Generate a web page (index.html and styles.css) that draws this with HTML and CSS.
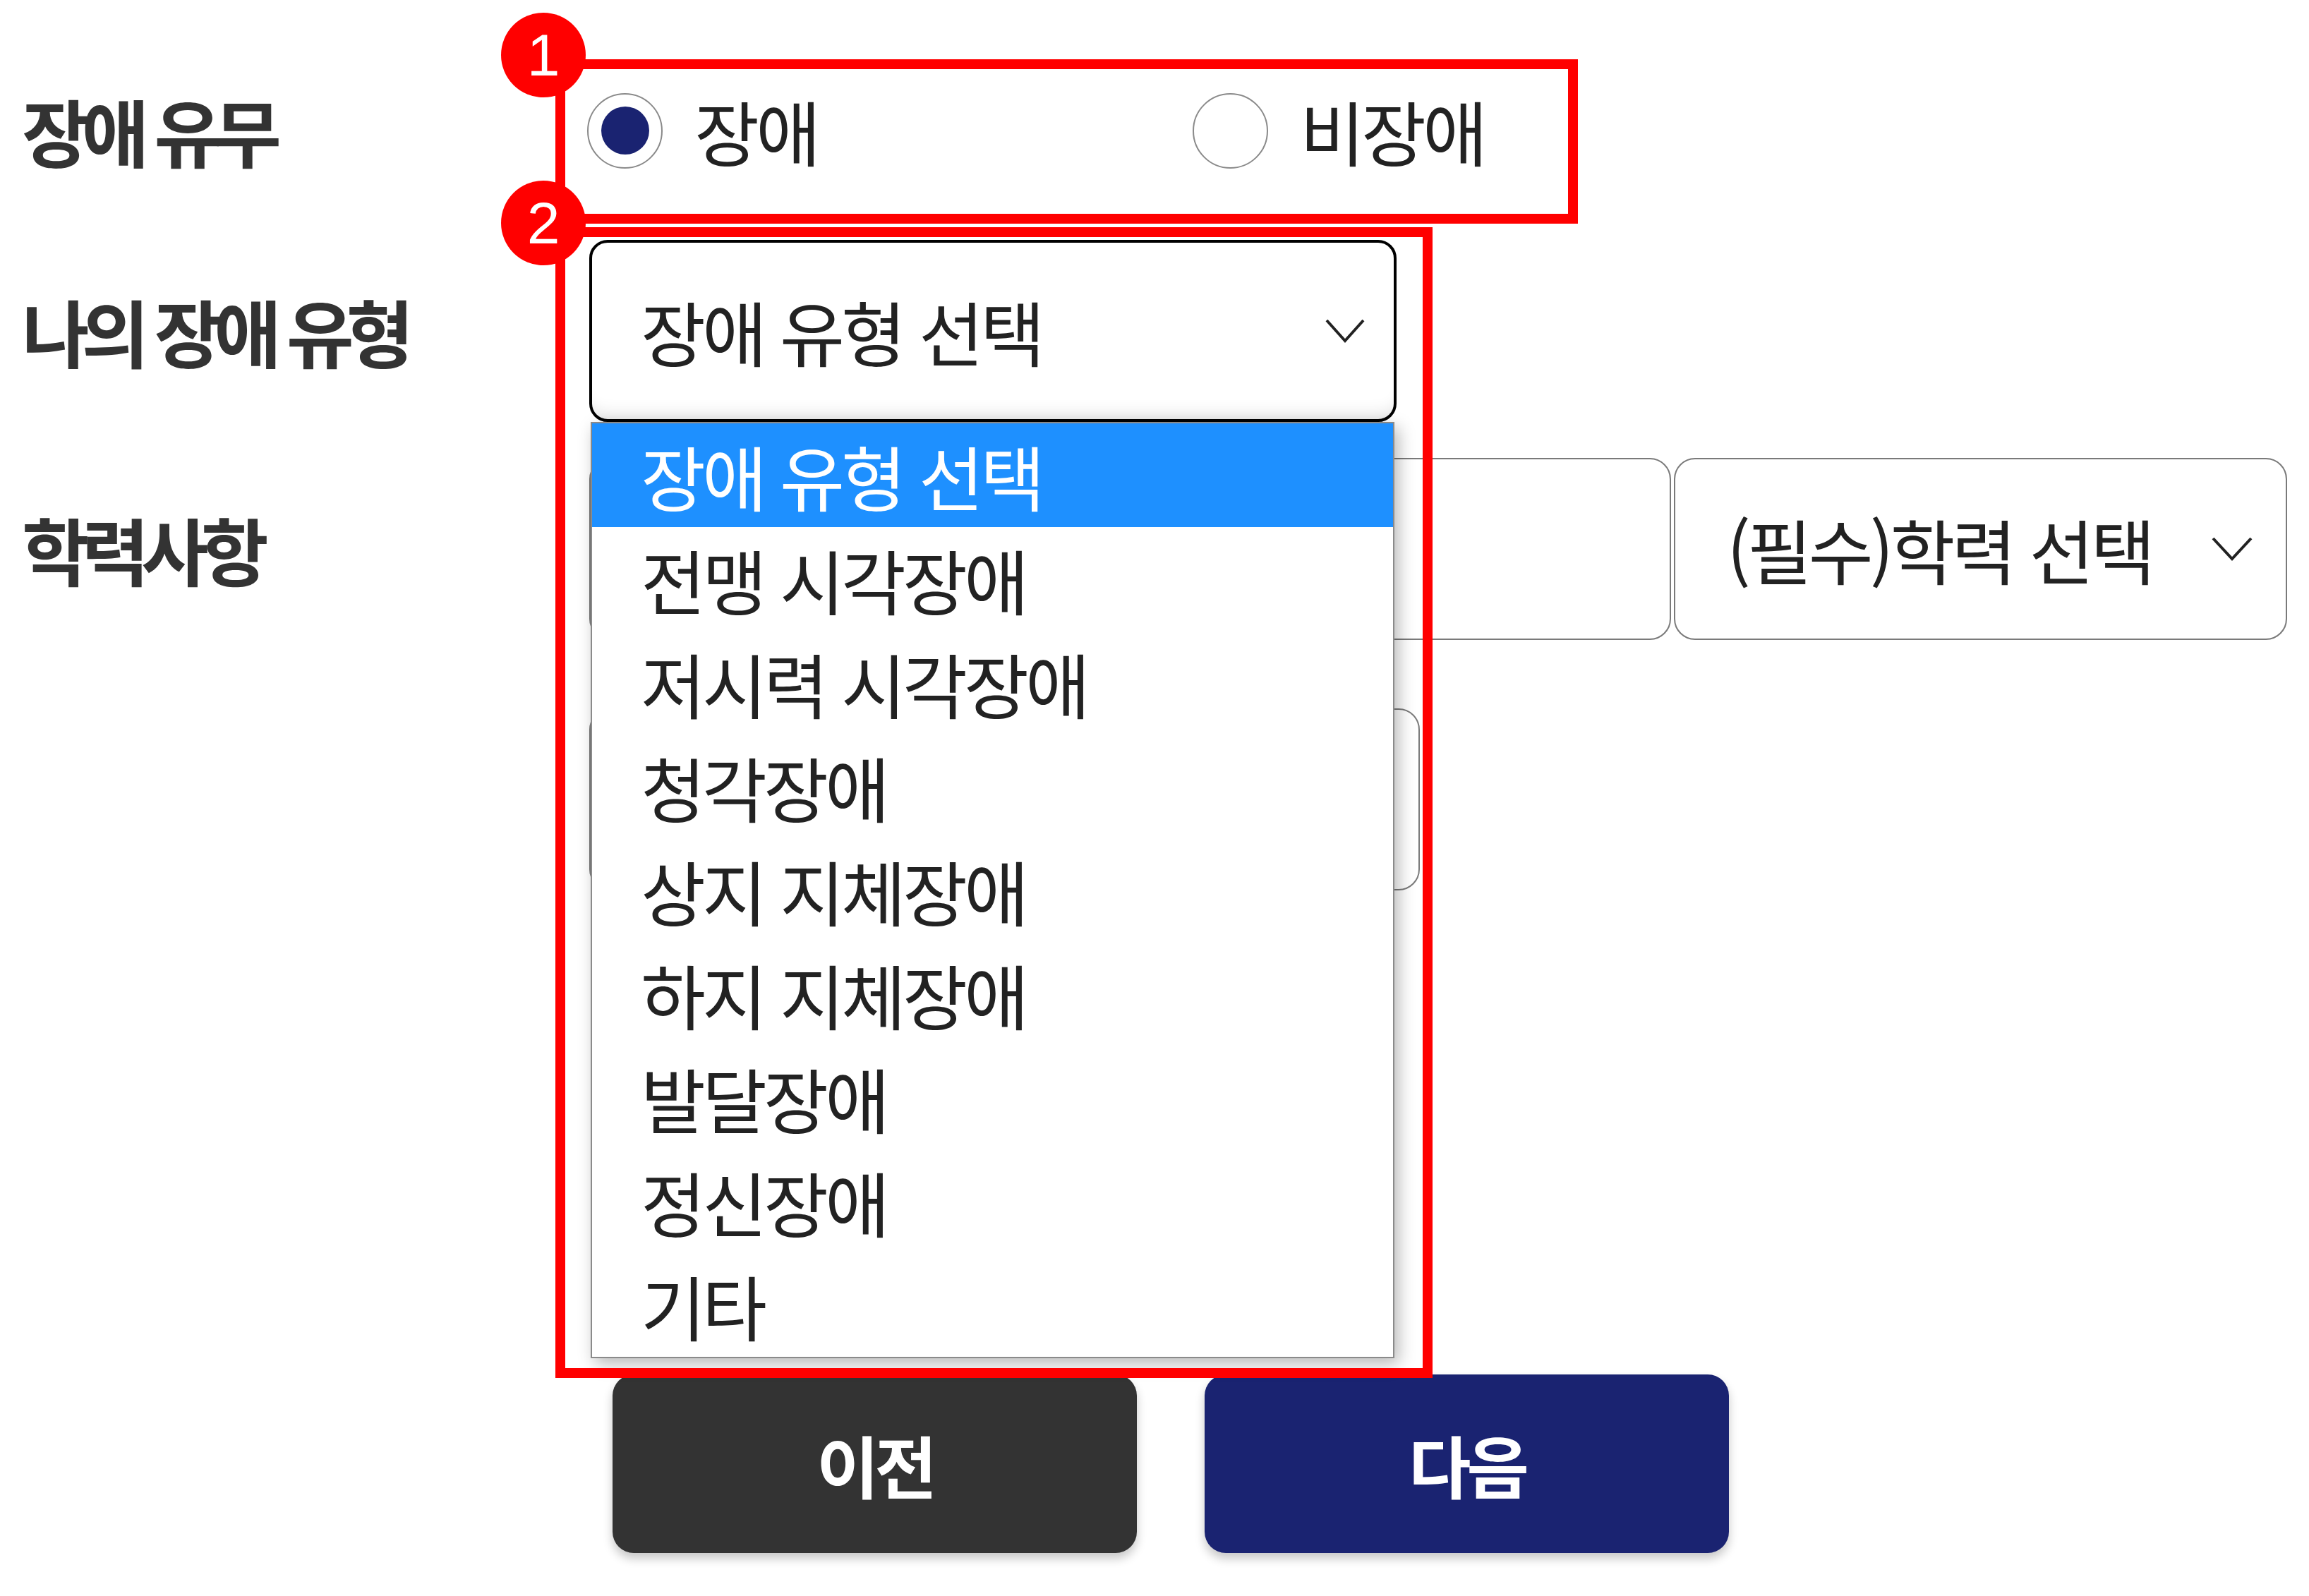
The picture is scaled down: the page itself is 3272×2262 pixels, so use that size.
FILE: index.html
```html
<!DOCTYPE html>
<html lang="ko">
<head>
    <meta charset="UTF-8">
    <meta name="viewport" content="width=device-width, initial-scale=1.0">
    <title>장애 정보 입력</title>
    <link rel="stylesheet" href="styles.css">
</head>
<body>
    <div class="page">
        <form class="form">
            <div class="row row-radio">
                <div class="row-label">장애 유무</div>
                <div class="radio-group">
                    <label class="radio"><span class="radio-mark checked"></span>장애</label>
                    <label class="radio"><span class="radio-mark"></span>비장애</label>
                </div>
            </div>

            <div class="row row-type">
                <div class="row-label">나의 장애 유형</div>
                <div class="select-wrap">
                    <div class="select select-open">
                        <span>장애 유형 선택</span>
                        <svg class="chevron" width="58" height="36" viewBox="0 0 58 36"><polyline points="3,3 29,32 55,3" fill="none" stroke="#222" stroke-width="4"/></svg>
                    </div>
                    <!-- native select popup, opened -->
                    <ul class="dropdown">
                        <li class="active">장애 유형 선택</li>
                        <li>전맹 시각장애</li>
                        <li>저시력 시각장애</li>
                        <li>청각장애</li>
                        <li>상지 지체장애</li>
                        <li>하지 지체장애</li>
                        <li>발달장애</li>
                        <li>정신장애</li>
                        <li>기타</li>
                    </ul>
                </div>
            </div>

            <div class="row row-school">
                <div class="row-label">학력사항</div>
                <div class="field field-school"></div>
                <div class="select select-grey">
                    <span>(필수)학력 선택</span>
                    <svg class="chevron" width="60" height="36" viewBox="0 0 60 36"><polyline points="3,3 30,32 57,3" fill="none" stroke="#222" stroke-width="4"/></svg>
                </div>
            </div>

            <div class="row row-major">
                <div class="row-label"></div>
                <div class="field field-major"></div>
            </div>

            <div class="actions">
                <button type="button" class="btn btn-prev">이전</button>
                <button type="button" class="btn btn-next">다음</button>
            </div>
        </form>

        <!-- guide marks -->
        <div class="annot annot-1"></div>
        <div class="annot annot-2"></div>
        <span class="badge badge-1">1</span>
        <span class="badge badge-2">2</span>
    </div>
</body>
</html>
```

FILE: styles.css
```css
body {
    margin: 0;
    background: #fff;
    font-family: "Noto Sans CJK KR", "Noto Sans", sans-serif;
    color: #222;
}
.page {
    position: relative;
    width: 3272px;
    height: 2262px;
    overflow: hidden;
}
.form {
    padding: 120px 31px 0 31px;
}
.row {
    display: flex;
    align-items: center;
}
.row-label {
    width: 804px;
    flex: none;
    font-size: 104px;
    font-weight: 700;
    letter-spacing: -11px;
    line-height: 1;
    color: #333;
}
.row-radio {
    height: 130px;
}
.row-type {
    margin-top: 90px;
}
.row-school {
    margin-top: 51px;
}
.row-major {
    margin-top: 97px;
}

/* radios */
.radio-group {
    display: grid;
    grid-template-columns: 858px auto;
    margin-left: -3px;
}
.radio {
    display: flex;
    align-items: center;
    gap: 45px;
    font-size: 100px;
    letter-spacing: -5px;
    line-height: 1;
}
.radio-mark {
    width: 107px;
    height: 107px;
    box-sizing: border-box;
    border: 2px solid #8a8a8a;
    border-radius: 50%;
    background: #fff;
    display: grid;
    place-items: center;
}
.radio-mark.checked::after {
    content: "";
    width: 68px;
    height: 68px;
    border-radius: 50%;
    background: #1a2371;
}

/* selects */
.select-wrap {
    position: relative;
    width: 1144px;
}
.select {
    display: flex;
    align-items: center;
    justify-content: space-between;
    height: 258px;
    box-sizing: border-box;
    font-size: 100px;
    letter-spacing: -5px;
    line-height: 1;
    background: #fff;
}
.select-open {
    border: 4px solid #000;
    border-radius: 26px;
    padding: 0 40px 0 69px;
    box-shadow: inset 0 -26px 22px -18px rgba(0, 0, 0, 0.1);
}
.select-grey {
    width: 869px;
    flex: none;
    border: 2px solid #7a7a7a;
    border-radius: 30px;
    padding: 0 46px 0 73px;
}
.dropdown {
    position: absolute;
    top: 258px;
    left: 2px;
    width: 1139px;
    box-sizing: border-box;
    margin: 0;
    padding: 0;
    list-style: none;
    background: #fff;
    border: 2px solid #8a8a8a;
    box-shadow: 6px 8px 22px rgba(0, 0, 0, 0.28);
    z-index: 2;
}
.dropdown li {
    height: 147px;
    line-height: 147px;
    padding-left: 69px;
    font-size: 100px;
    letter-spacing: -5px;
}
.dropdown li.active {
    background: #1e90ff;
    color: #fff;
}

.field {
    height: 258px;
    box-sizing: border-box;
    border: 2px solid #7a7a7a;
    border-radius: 30px;
    background: #fff;
}
.field-school {
    width: 1533px;
    margin-right: 4px;
}
.field-major {
    width: 1177px;
}

/* buttons */
.actions {
    display: flex;
    gap: 96px;
    margin-top: 686px;
    padding-left: 837px;
}
.btn {
    width: 743px;
    height: 253px;
    border: none;
    border-radius: 30px;
    color: #fff;
    font-family: "Noto Sans CJK KR", sans-serif;
    font-size: 96px;
    font-weight: 700;
    letter-spacing: -6px;
    box-shadow: 0 8px 14px rgba(0, 0, 0, 0.22);
}
.btn-prev {
    background: #333;
}
.btn-next {
    background: #1a2371;
}

/* red guide marks */
.annot {
    position: absolute;
    box-sizing: border-box;
    border: 14px solid #f00;
    z-index: 3;
}
.annot-1 {
    left: 787px;
    top: 84px;
    width: 1449px;
    height: 233px;
}
.annot-2 {
    left: 787px;
    top: 322px;
    width: 1243px;
    height: 1631px;
}
.badge {
    position: absolute;
    width: 120px;
    height: 120px;
    border-radius: 50%;
    background: #f00;
    color: #fff;
    font-family: "Liberation Sans", sans-serif;
    font-size: 84px;
    line-height: 120px;
    text-align: center;
    z-index: 4;
}
.badge-1 {
    left: 710px;
    top: 18px;
}
.badge-2 {
    left: 710px;
    top: 256px;
}
```
